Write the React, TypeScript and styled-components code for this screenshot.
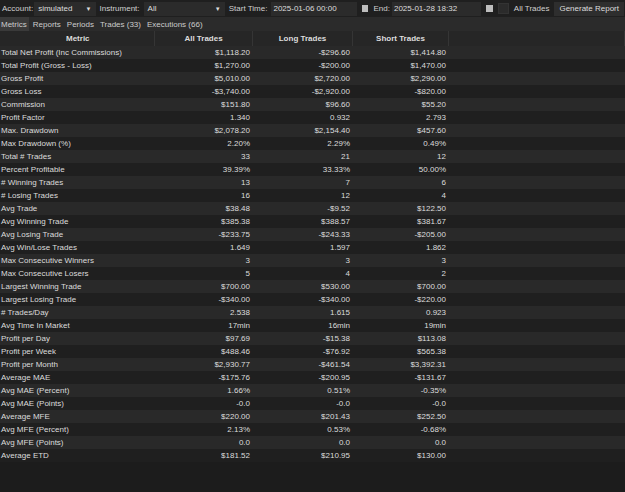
import React from "react";
import styled, { createGlobalStyle } from "styled-components";

const G = createGlobalStyle`
  body { margin:0; background:#1c1c1c; font-family:"Liberation Sans", Arial, sans-serif; font-size:8px; color:#dcdcdc; }
`;
const Wrap = styled.div`width:625px;height:492px;overflow:hidden;background:#1c1c1c;`;
const Toolbar = styled.div`display:flex;align-items:center;height:17px;padding:0 1px;background:#1f1f1f;white-space:nowrap;`;
const Label = styled.span<{ ml?: number }>`color:#cfcfcf;white-space:nowrap;margin:0 ${p => p.ml ?? 4}px 0 ${p => p.ml ?? 4}px;`;
const Select = styled.div<{ w: number }>`width:${p => p.w}px;height:14px;background:#2b2b2b;display:flex;align-items:center;justify-content:space-between;padding:0 4px;box-sizing:border-box;color:#ddd;`;
const Input = styled.div<{ w: number }>`width:${p => p.w}px;height:14px;background:#2b2b2b;display:flex;align-items:center;padding:0 2px;box-sizing:border-box;color:#ddd;`;
const Check = styled.div`width:7px;height:7px;background:#bdbdbd;margin:0 3px 0 5px;`;
const Box = styled.div`width:9px;height:9px;background:#2b2b2b;border:1px solid #333;margin-left:2px;`;
const Btn = styled.div`height:14px;padding:0 5px;background:#2e2e2e;display:flex;align-items:center;color:#ddd;`;
const Tabs = styled.div`display:flex;height:14px;background:#2b2b2b;align-items:center;gap:3px;`;
const Tab = styled.div<{ active?: boolean }>`padding:0 2px 0 1px;height:14px;display:flex;align-items:center;background:${p => p.active ? "#3a3a3a" : "transparent"};color:#ccc;`;
const Grid = styled.div`display:grid;grid-template-columns:155px 98px 100px 96px 1fr;`;
const Head = styled.div<{ align: string }>`height:15px;display:flex;align-items:center;justify-content:${p => p.align};padding-left:${p => p.align === "flex-start" ? "66px" : "0"};font-weight:bold;background:#262626;border-right:1px solid #353535;color:#ddd;box-sizing:border-box;`;
const Cell = styled.div<{ odd: boolean; right?: boolean }>`height:13px;display:flex;align-items:center;justify-content:${p => p.right ? "flex-end" : "flex-start"};padding:0 ${p => p.right ? "3px" : "0"} 0 1px;background:${p => p.odd ? "#1f1f1f" : "#292929"};white-space:nowrap;`;

const rows: string[][] = [
  ["Total Net Profit (Inc Commissions)", "$1,118.20", "-$296.60", "$1,414.80"],
  ["Total Profit (Gross - Loss)", "$1,270.00", "-$200.00", "$1,470.00"],
  ["Gross Profit", "$5,010.00", "$2,720.00", "$2,290.00"],
  ["Gross Loss", "-$3,740.00", "-$2,920.00", "-$820.00"],
  ["Commission", "$151.80", "$96.60", "$55.20"],
  ["Profit Factor", "1.340", "0.932", "2.793"],
  ["Max. Drawdown", "$2,078.20", "$2,154.40", "$457.60"],
  ["Max Drawdown (%)", "2.20%", "2.29%", "0.49%"],
  ["Total # Trades", "33", "21", "12"],
  ["Percent Profitable", "39.39%", "33.33%", "50.00%"],
  ["# Winning Trades", "13", "7", "6"],
  ["# Losing Trades", "16", "12", "4"],
  ["Avg Trade", "$38.48", "-$9.52", "$122.50"],
  ["Avg Winning Trade", "$385.38", "$388.57", "$381.67"],
  ["Avg Losing Trade", "-$233.75", "-$243.33", "-$205.00"],
  ["Avg Win/Lose Trades", "1.649", "1.597", "1.862"],
  ["Max Consecutive Winners", "3", "3", "3"],
  ["Max Consecutive Losers", "5", "4", "2"],
  ["Largest Winning Trade", "$700.00", "$530.00", "$700.00"],
  ["Largest Losing Trade", "-$340.00", "-$340.00", "-$220.00"],
  ["# Trades/Day", "2.538", "1.615", "0.923"],
  ["Avg Time In Market", "17min", "16min", "19min"],
  ["Profit per Day", "$97.69", "-$15.38", "$113.08"],
  ["Profit per Week", "$488.46", "-$76.92", "$565.38"],
  ["Profit per Month", "$2,930.77", "-$461.54", "$3,392.31"],
  ["Average MAE", "-$175.76", "-$200.95", "-$131.67"],
  ["Avg MAE (Percent)", "1.66%", "0.51%", "-0.35%"],
  ["Avg MAE (Points)", "-0.0", "-0.0", "-0.0"],
  ["Average MFE", "$220.00", "$201.43", "$252.50"],
  ["Avg MFE (Percent)", "2.13%", "0.53%", "-0.68%"],
  ["Avg MFE (Points)", "0.0", "0.0", "0.0"],
  ["Average ETD", "$181.52", "$210.95", "$130.00"],
];

const Arrow = () => <span style={{ fontSize: "6px" }}>▼</span>;

export default function App() {
  return (
    <Wrap>
      <G />
      <Toolbar>
        <Label ml={1}>Account:</Label>
        <Select w={62}><span>simulated</span><Arrow /></Select>
        <Label>Instrument:</Label>
        <Select w={82}><span>All</span><Arrow /></Select>
        <Label>Start Time:</Label>
        <Input w={86}>2025-01-06 00:00</Input>
        <Check />
        <Label ml={2}>End:</Label>
        <Input w={90}>2025-01-28 18:32</Input>
        <Check />
        <Box />
        <Label ml={5}>All Trades</Label>
        <Btn>Generate Report</Btn>
      </Toolbar>
      <Tabs>
        <Tab active>Metrics</Tab>
        <Tab>Reports</Tab>
        <Tab>Periods</Tab>
        <Tab>Trades (33)</Tab>
        <Tab>Executions (66)</Tab>
      </Tabs>
      <Grid>
        <Head align="flex-start">Metric</Head>
        <Head align="center">All Trades</Head>
        <Head align="center">Long Trades</Head>
        <Head align="center">Short Trades</Head>
        <Head align="center" />
        {rows.map((r, i) => (
          <React.Fragment key={i}>
            <Cell odd={i % 2 === 1}>{r[0]}</Cell>
            <Cell odd={i % 2 === 1} right>{r[1]}</Cell>
            <Cell odd={i % 2 === 1} right>{r[2]}</Cell>
            <Cell odd={i % 2 === 1} right>{r[3]}</Cell>
            <Cell odd={i % 2 === 1} />
          </React.Fragment>
        ))}
      </Grid>
    </Wrap>
  );
}
